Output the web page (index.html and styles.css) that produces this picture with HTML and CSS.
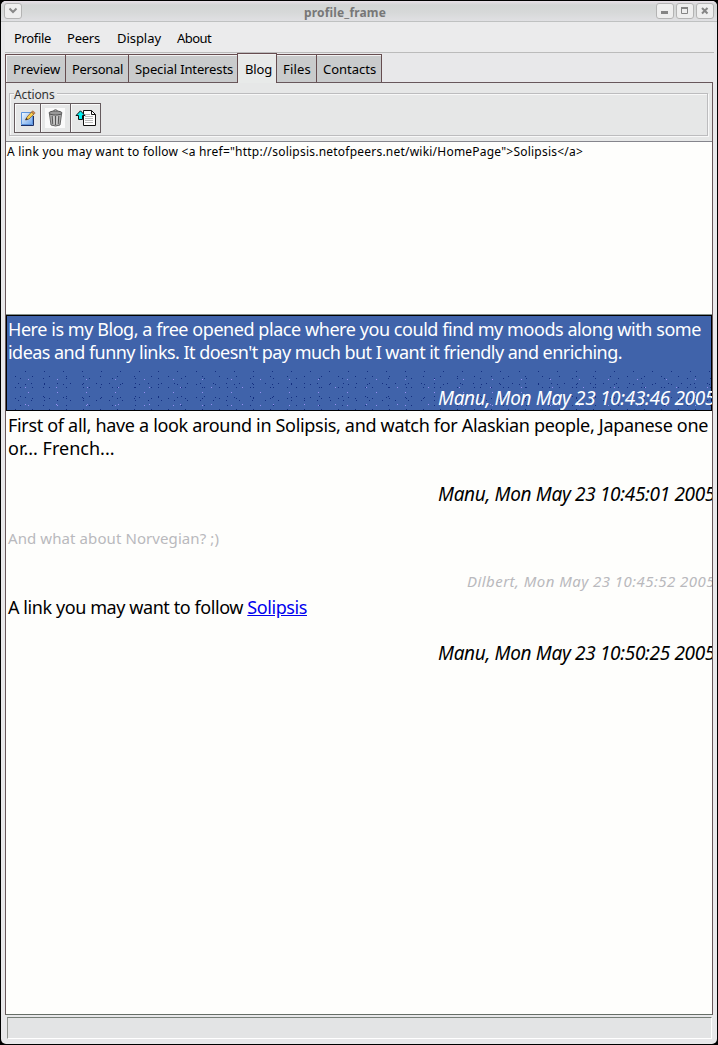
FILE: index.html
```
<!DOCTYPE html>
<html lang="en">
<head>
<meta charset="utf-8">
<title>profile_frame</title>
<link rel="stylesheet" href="styles.css">
</head>
<body>
<div class="window">
  <header class="titlebar">
    <span class="winbtn"><svg width="10" height="8" viewBox="0 0 10 8"><path d="M1.500 1.500L5 5L8.500 1.500" fill="none" stroke="#888" stroke-width="2"/></svg></span>
    <h1 class="title">profile_frame</h1>
    <span class="winbtn"><svg width="10" height="10" viewBox="0 0 10 10"><path d="M1 5h7v3H1z" fill="#858585"/></svg></span>
    <span class="winbtn"><svg width="10" height="10" viewBox="0 0 10 10"><path d="M1.500 1.500h6v6h-6z" fill="none" stroke="#858585"/><path d="M1 1h7v2H1z" fill="#858585"/></svg></span>
    <span class="winbtn"><svg width="10" height="10" viewBox="0 0 10 10"><path d="M2 2L7.500 7.500M7.500 2L2 7.500" stroke="#858585" stroke-width="2"/></svg></span>
  </header>
  <nav class="menu"><span class="m-profile">Profile</span><span class="m-peers">Peers</span><span class="m-display">Display</span><span class="m-about">About</span></nav>
  <div class="tabs">
    <span class="tab t-preview">Preview</span><span class="tab t-personal">Personal</span><span class="tab t-special">Special Interests</span><span class="tab active">Blog</span><span class="tab t-files">Files</span><span class="tab t-contacts">Contacts</span>
  </div>
  <main class="page">
    <section class="actions">
      <h2 class="legend">Actions</h2>
      <div class="tools">
        <button class="tool edit"><svg width="16" height="17" viewBox="0 0 16 17"><defs><linearGradient id="sheet" x2="1" y2="1"><stop stop-color="#f4fbff"/><stop offset="1" stop-color="#6da3ea"/></linearGradient></defs><path d="M1.500 2.500h11v12h-11z" fill="url(#sheet)" stroke="#5b93dc"/><path d="M1 15.500h12.500V6" fill="none" stroke="#1c2f66"/><path d="M5.500 10L7 7L11.500 2L14 4.200L9 9z" fill="#f8cf4c" stroke="#80562c" stroke-width=".8"/><path d="M11.500 2L13 .8L15.200 3L14 4.300z" fill="#d98a4d" stroke="#80562c" stroke-width=".5"/><path d="M5.500 10l.8-2L8 9.300z" fill="#222"/></svg></button>
        <button class="tool trash"><svg width="20" height="20" viewBox="0 0 20 20"><path d="M0 0h20v20H0z" fill="#fafafa"/><path d="M4.500 6h12l-1.500 11q-4.400 2-9 0z" fill="#b0b0b0" stroke="#666"/><ellipse cx="10.500" cy="5" rx="6.500" ry="2" fill="#999" stroke="#555"/><path d="M8.500 2.500q2-1.500 4 0" fill="none" stroke="#555"/><path d="M7.200 8l.6 8M10.500 8v9M13.800 8l-.6 8" stroke="#555"/><path d="M8.800 8l.3 8M12.200 8l-.3 8" stroke="#e4e4e4" stroke-width=".8"/></svg></button>
        <button class="tool upload"><svg width="22" height="16" viewBox="0 0 22 16"><path d="M8.500.5h8l4 4v11h-12z" fill="#fff" stroke="#111"/><path d="M16.500.5v4h4" fill="none" stroke="#111"/><path d="M10 4.500h5M10 6.500h8M10 8.500h8M10 10.500h8M10 12.500h8" stroke="#bbb"/><path d="M5.500.8L10 5.500H7.500v4h-4v-4H1z" fill="#00f0f0" stroke="#111"/></svg></button>
      </div>
    </section>
    <div class="editor">A link you may want to follow &lt;a href="http://solipsis.netofpeers.net/wiki/HomePage"&gt;Solipsis&lt;/a&gt;</div>
    <section class="blog">
      <article class="entry selected">
        <p class="intro"><span>Here is my Blog, a free opened place where you could find my moods along with some</span><br><span class="intro-end">ideas and funny links. It doesn't pay much but I want it friendly and enriching.</span></p>
        <p class="sig">Manu, Mon May 23 10:43:46 2005</p>
      </article>
      <article class="entry">
        <p class="first"><span>First of all, have a look around in Solipsis, and watch for Alaskian people, Japanese one</span><br><span class="first-end">or... French...</span></p>
        <p class="sig">Manu, Mon May 23 10:45:01 2005</p>
      </article>
      <article class="entry comment">
        <p>And what about Norvegian? ;)</p>
        <p class="sig">Dilbert, Mon May 23 10:45:52 2005</p>
      </article>
      <article class="entry">
        <p class="follow">A link you may want to follow <a href="#">Solipsis</a></p>
        <p class="sig">Manu, Mon May 23 10:50:25 2005</p>
      </article>
    </section>
  </main>
  <footer class="status"></footer>
</div>
</body>
</html>
```
FILE: styles.css
```
*{box-sizing:border-box}
body{margin:0;background:#000;font:13px "Noto Sans","Open Sans",sans-serif;color:#000;overflow:hidden}
h1,h2,p{margin:0}
.window{height:1043px;margin:1px 1px 0;border-radius:5px;background:#e8e8ea;display:flex;flex-direction:column;overflow:hidden}
.titlebar{flex:none;height:21px;display:flex;gap:2px;padding:2px 3px 0;background:linear-gradient(#e8e0e8,#d3d5d5 20%,#d6d8d8 55%,#e0e0e3);border-bottom:1px solid #bfc1c1}
.winbtn{width:18px;height:16px;border:1px solid #b4b4b4;border-radius:3px;background:#eee;display:flex;align-items:center;justify-content:center}
.title{flex:1;padding-left:18px;font-size:12px;line-height:19px;letter-spacing:.16px;color:#777;text-align:center;margin-left:-9px;margin-right:-3px}
.menu{flex:none;height:31px;display:flex;margin:0 3px 0 4px;padding-left:9px;line-height:33px;border-bottom:1px solid #bbb;background:#ebebec;white-space:nowrap}
.m-profile{width:53px;letter-spacing:-.33px}
.m-peers{width:50px;letter-spacing:-.22px}
.m-display{width:60px;letter-spacing:-.05px}
.m-about{letter-spacing:-.58px}
.tabs{flex:none;height:29px;display:flex;align-items:flex-end;padding-left:4px;white-space:nowrap}
.tab{height:28px;border:1px solid #664d50;border-width:1px 1px 0 0;background:#c9cbcc;padding-left:6px;line-height:28px;box-shadow:inset 0 1px #f2f2f2}
.t-preview{width:61px;border-left-width:1px;padding-left:7px;box-shadow:inset 1px 1px #f2f2f2}
.t-personal{width:63px;letter-spacing:-.29px}
.t-special{width:109px;letter-spacing:-.12px}
.active{position:relative;width:40px;height:30px;margin:0 0 -1px -1px;border-left-width:1px;background:#e8eae9;padding-left:7px;line-height:30px;letter-spacing:-.16px}
.t-files{width:40px;letter-spacing:.2px}
.t-contacts{width:65px}
.page{flex:none;height:933px;margin:0 4px 0 4px;border:1px solid #68575b;border-bottom-color:#666e66;background:#e6e7e7}
.actions{position:relative;height:43px;margin:10px 4px 5px 3px;border:1px solid #bcbcbe;box-shadow:inset 1px 1px #f8f8f8,1px 1px #f8f8f8}
.legend{position:absolute;left:4px;top:-7px;padding-right:2px;background:#e6e7e7;font-size:12px;font-weight:400;line-height:16px;letter-spacing:-.1px;color:#333}
.tools{display:flex;padding:9px 0 0 4px}
.tool{height:30px;padding:0;border:1px solid #655b5e;margin:0 0 0 -1px;background:#e6e7e7;display:flex;align-items:center;justify-content:center;box-shadow:inset 1px 1px #fafafa}
.edit{width:27px;margin-left:0}
.trash,.upload{width:31px}
.trash svg{margin-right:2px}
.editor{height:174px;border-top:1px solid #85858c;border-bottom:1px solid #85908a;background:#fefefc;font-size:12px;line-height:20px;letter-spacing:.222px;white-space:nowrap;padding-left:1px}
.blog{height:699px;background:#fefefc;font-size:18px;line-height:23px;white-space:nowrap;overflow:hidden}
.entry{padding:3px 0 0 2px}
.selected{position:relative;z-index:0;height:96px;border:1px solid #000;padding:2px 0 0 1px;color:#fff;background:#4063aa}
.selected::before{content:"";position:absolute;z-index:-1;left:0;right:0;bottom:0;height:39px;background:
radial-gradient(circle,#142f80 0 .7px,transparent .8px) 0 0/17px 11px,
radial-gradient(circle,#142f80 0 .7px,transparent .8px) 5px 4px/13px 17px,
radial-gradient(circle,#142f80 0 .7px,transparent .8px) 9px 7px/19px 13px,
radial-gradient(circle,#142f80 0 .7px,transparent .8px) 2px 3px/23px 9px,
radial-gradient(circle,#9590f0 0 .7px,transparent .8px) 7px 2px/29px 13px,
radial-gradient(circle,#9590f0 0 .7px,transparent .8px) 3px 8px/31px 17px}
.intro{letter-spacing:-.44px}
.intro-end{letter-spacing:-.535px}
.first{letter-spacing:-.32px}
.first-end{letter-spacing:0}
.follow{letter-spacing:-.42px}
.sig{width:277px;margin:23px 0 0 430px;font-size:19px;font-style:italic;letter-spacing:-.334px}
.comment{padding-top:22px;padding-bottom:0;font-size:15px;line-height:21.5px;letter-spacing:.088px;color:#b9b9bd}
.comment .sig{width:250px;margin:21.5px 0 0 459px;font-size:15px;letter-spacing:.456px}
.status{flex:none;height:22px;margin:2px 5px 0 6px;border:1px solid #fff;border-top-color:#777f78;border-left-color:#90948f;background:#e3e4e5}
```
